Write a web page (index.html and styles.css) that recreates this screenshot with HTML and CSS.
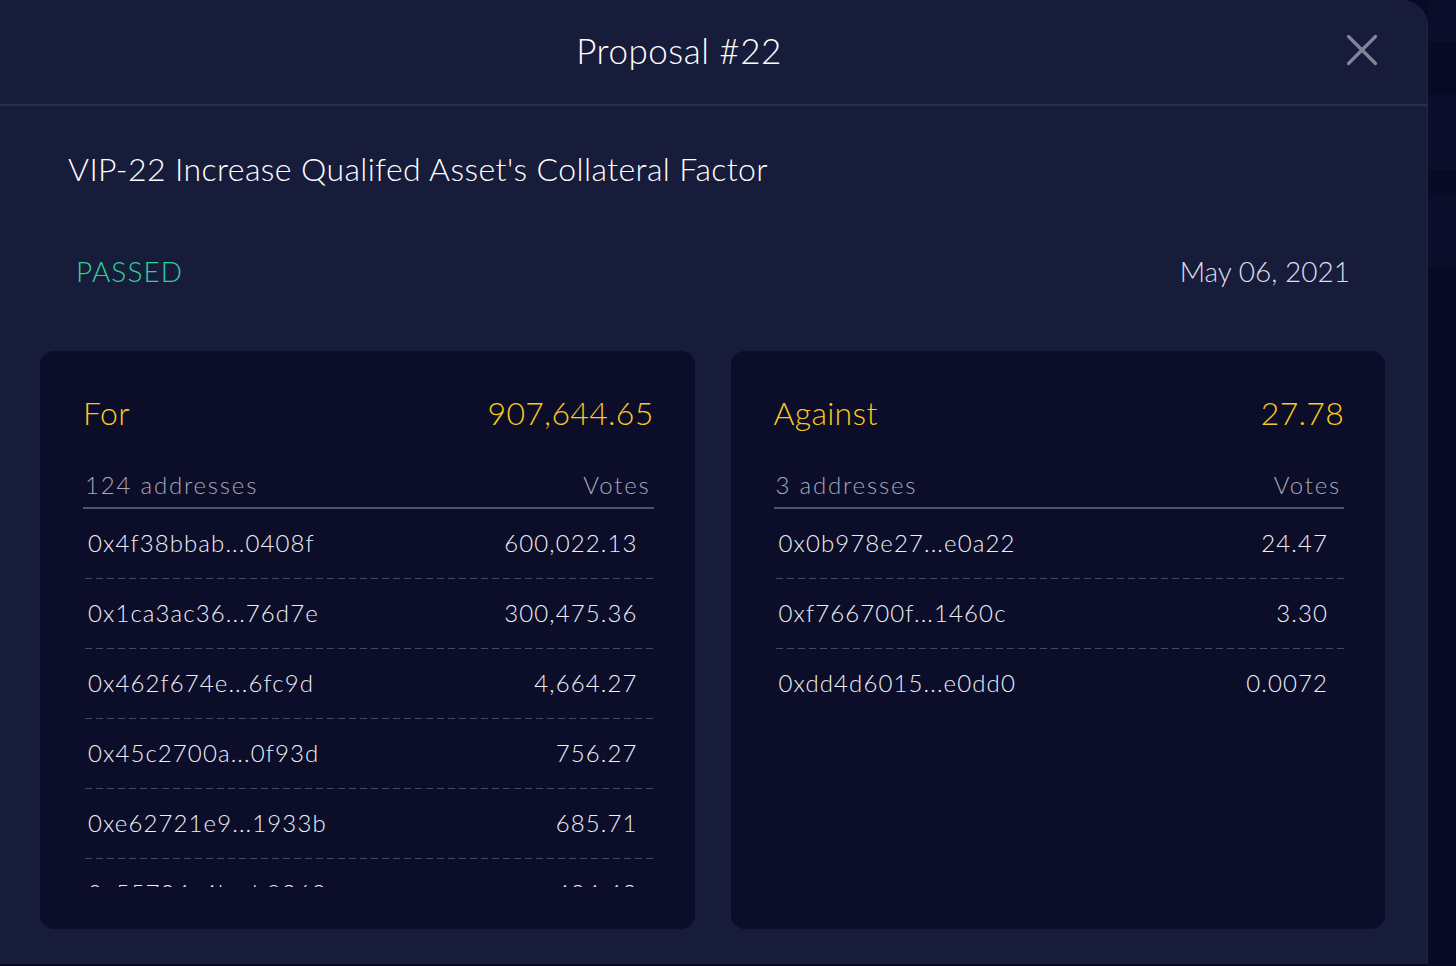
FILE: index.html
```html
<!DOCTYPE html>
<html lang="en">
<head>
  <meta charset="UTF-8">
  <meta name="viewport" content="width=device-width, initial-scale=1.0">
  <title>Proposal #22</title>
  <link rel="stylesheet" href="styles.css">
</head>
<body>
  <div class="modal">
    <div class="modal-header">
      <h1 class="modal-title">Proposal #22</h1>
      <button class="close-btn" aria-label="Close">
        <svg width="48" height="48" viewBox="0 0 48 48">
          <path d="M10.5 10.5 L37.5 37.5 M37.5 10.5 L10.5 37.5" stroke="#80859b" stroke-width="3.2" stroke-linecap="round" fill="none"/>
        </svg>
      </button>
    </div>

    <div class="modal-body">
      <p class="proposal-name">VIP-22 Increase Qualifed Asset's Collateral Factor</p>

      <div class="status-row">
        <span class="status passed">PASSED</span>
        <span class="status-date">May 06, 2021</span>
      </div>

      <div class="vote-cards">
        <div class="vote-card">
          <div class="tally">
            <span>For</span>
            <span>907,644.65</span>
          </div>
          <div class="list-head">
            <span>124 addresses</span>
            <span>Votes</span>
          </div>
          <div class="voter-list">
            <div class="voter-row"><span>0x4f38bbab...0408f</span><span>600,022.13</span></div>
            <div class="voter-row"><span>0x1ca3ac36...76d7e</span><span>300,475.36</span></div>
            <div class="voter-row"><span>0x462f674e...6fc9d</span><span>4,664.27</span></div>
            <div class="voter-row"><span>0x45c2700a...0f93d</span><span>756.27</span></div>
            <div class="voter-row"><span>0xe62721e9...1933b</span><span>685.71</span></div>
            <div class="voter-row"><span>0x55704c4b...b9368</span><span>424.42</span></div>
          </div>
        </div>

        <div class="vote-card">
          <div class="tally">
            <span>Against</span>
            <span>27.78</span>
          </div>
          <div class="list-head">
            <span>3 addresses</span>
            <span>Votes</span>
          </div>
          <div class="voter-list">
            <div class="voter-row"><span>0x0b978e27...e0a22</span><span>24.47</span></div>
            <div class="voter-row"><span>0xf766700f...1460c</span><span>3.30</span></div>
            <div class="voter-row last"><span>0xdd4d6015...e0dd0</span><span>0.0072</span></div>
          </div>
        </div>
      </div>
    </div>
  </div>

  <div class="backdrop-side">
    <div class="side-block a"></div>
    <div class="side-block b"></div>
    <div class="side-block a tall"></div>
    <div class="side-block b short"></div>
    <div class="side-block a tall"></div>
  </div>
</body>
</html>
```

FILE: styles.css
```css
* {
  margin: 0;
  padding: 0;
  box-sizing: border-box;
}

body {
  display: flex;
  height: 966px;
  overflow: hidden;
  background: #070a23;
  font-family: Lato, "Open Sans", sans-serif;
  font-weight: 300;
  color: #eef0f6;
}

.modal {
  width: 1428px;
  height: 964px;
  flex-shrink: 0;
  background: #181c3b;
  border-top-right-radius: 26px;
  border-right: 1px solid #1f2548;
}

.modal-header {
  display: flex;
  align-items: center;
  height: 106px;
  padding: 0 41px 4px 20px;
  border-bottom: 2px solid #28313f;
}

.modal-title {
  flex: 1;
  text-align: center;
  font-size: 35px;
  font-weight: 300;
  color: #ffffff;
  letter-spacing: 0.5px;
}

.close-btn {
  width: 48px;
  height: 48px;
  border: none;
  background: none;
  cursor: pointer;
  display: flex;
}

.modal-body {
  padding: 0 42px 0 40px;
}

.proposal-name {
  margin-top: 43px;
  padding-left: 28px;
  font-size: 32px;
  line-height: 40px;
  letter-spacing: 0.4px;
  color: #ffffff;
}

.status-row {
  display: flex;
  justify-content: space-between;
  align-items: center;
  margin-top: 62px;
  padding: 0 35px 0 36px;
  font-size: 28px;
  line-height: 40px;
}

.passed {
  color: #2fd19d;
  letter-spacing: 1.1px;
}

.status-date {
  color: #dcdee8;
}

.vote-cards {
  display: grid;
  grid-template-columns: 1fr 1fr;
  gap: 36px;
  margin-top: 60px;
}

.vote-card {
  height: 578px;
  background: #0b0d29;
  border-radius: 14px;
  padding: 39px 41px 41px 43px;
}

.tally {
  display: flex;
  justify-content: space-between;
  font-size: 32px;
  line-height: 46px;
  color: #fcc91e;
  letter-spacing: 0.3px;
}

.list-head {
  display: flex;
  justify-content: space-between;
  margin-top: 32px;
  padding: 0 3px 5px 2px;
  font-size: 24px;
  line-height: 34px;
  letter-spacing: 1.8px;
  color: #a4a8ba;
  border-bottom: 2px solid #4d5369;
}

.voter-list {
  height: 378px;
  overflow: hidden;
}

.voter-row {
  display: flex;
  justify-content: space-between;
  align-items: center;
  height: 70px;
  padding: 0 16px 4px 5px;
  font-size: 24px;
  letter-spacing: 1.1px;
  background: linear-gradient(to right, #414864 60%, transparent 0) 2px 100% / 11px 1px repeat-x;
}

.voter-row.last {
  background: none;
}

.backdrop-side {
  flex: 1;
  display: flex;
  flex-direction: column;
}

.side-block {
  height: 42px;
}

.side-block.a {
  background: #0b0e2a;
}

.side-block.b {
  height: 53px;
  background: #070a24;
}

.side-block.tall {
  height: 75px;
}

.side-block.short {
  height: 23px;
}
```
